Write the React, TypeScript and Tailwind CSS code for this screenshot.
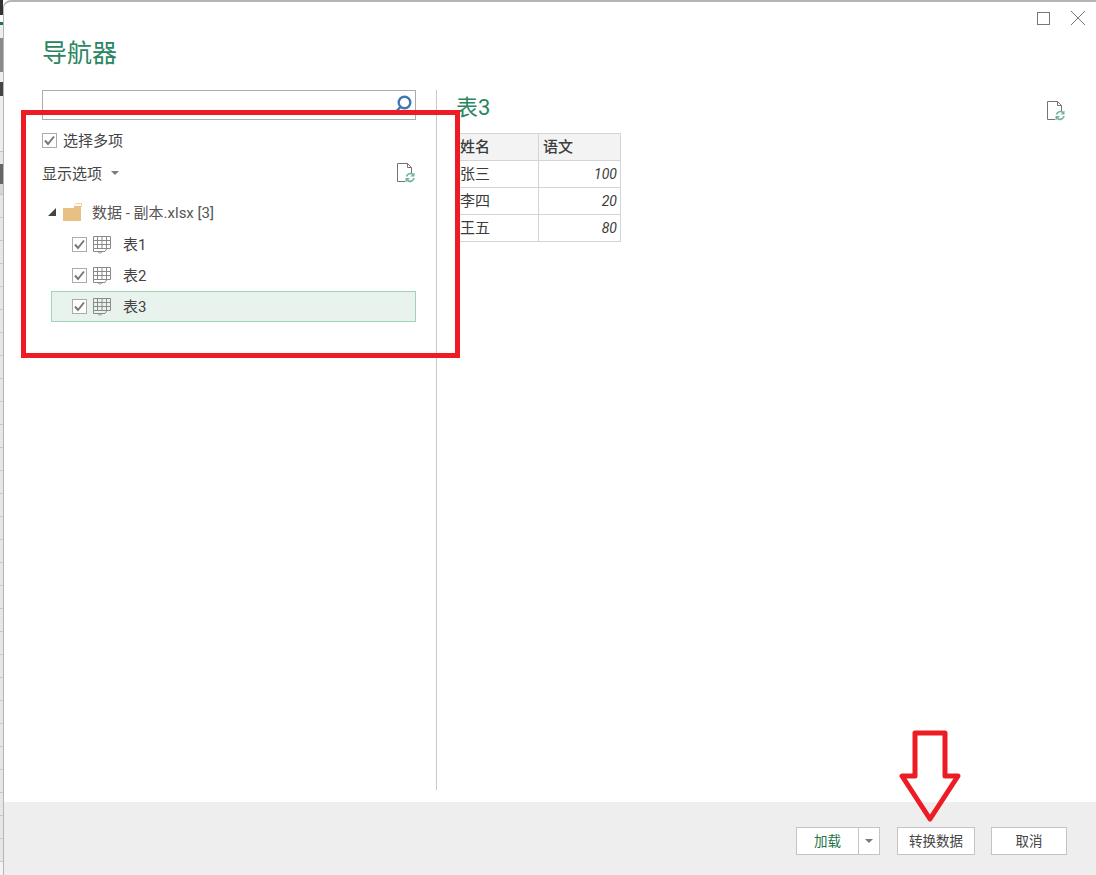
const cjk = "font-['Roboto','Noto_Sans_CJK_SC',sans-serif]";

const CheckBox = () => (
  <span className="flex h-[15px] w-[15px] shrink-0 items-center justify-center border border-[#ababab] bg-white">
    <svg width="11" height="11" viewBox="0 0 11 11" fill="none">
      <path d="M1 5.5 L4 9 L10 1.5" stroke="#777777" strokeWidth="2" />
    </svg>
  </span>
);

const RefreshDoc = () => (
  <svg width="19" height="20" viewBox="0 0 19 20" fill="none">
    <path d="M0.5 0.5 H10.5 L14.5 4.5 V10 M10.5 0.5 V4.5 H14.5 M8 18.5 H0.5 V0.5" stroke="#737373" strokeWidth="1" />
    <path d="M9.5 13.5 A4 4 0 0 1 16 11.5 M17 15 A4 4 0 0 1 10.5 17.5" stroke="#6fb597" strokeWidth="1.7" />
    <path d="M17.5 9.5 V13.5 H13.5 Z M8.5 19.5 V15 H13 Z" fill="#6fb597" />
  </svg>
);

const TableIcon = () => (
  <svg width="19" height="18" viewBox="0 0 19 18" fill="none" className="shrink-0">
    <path
      d="M0.5 0.5 H17.5 V12.5 H0.5 Z M0.5 4.5 H17.5 M0.5 8.5 H17.5 M4.5 0.5 V12.5 M9 0.5 V12.5 M13.5 0.5 V12.5 M0.5 12.5 V15.5 H12 L14 12.5 M5 15.5 C5 17.5 9 17.5 9 15.5"
      stroke="#8a8a8a"
      strokeWidth="1"
    />
  </svg>
);

const Caret = () => (
  <span className="h-0 w-0 border-x-[4px] border-t-[4px] border-x-transparent border-t-[#7a7a7a]" />
);

const TreeItem = ({ label, selected }: { label: string; selected?: boolean }) => (
  <div
    className={
      selected
        ? 'flex h-[31px] items-center border border-[#9fd4b6] bg-[#e9f3ee] pl-[20px]'
        : 'flex h-[31px] items-center border border-transparent pl-[20px]'
    }
  >
    <CheckBox />
    <span className="ml-[6px] flex">
      <TableIcon />
    </span>
    <span className="ml-[11px] pt-[2px] text-[15px] text-[#444444]">{label}</span>
  </div>
);

const rows = [
  { name: '张三', score: 100 },
  { name: '李四', score: 20 },
  { name: '王五', score: 80 }
];

const sheetRows = Array.from({ length: 29 }, (_, i) => i);

export default function App() {
  return (
    <div className={`relative flex h-[875px] w-[1096px] overflow-hidden bg-white ${cjk}`}>
      {/* sliver of the spreadsheet behind the dialog */}
      <div className="flex w-[3px] shrink-0 flex-col bg-[#f4f4f4]">
        <div className="h-[15px] bg-[#333333]" />
        <div className="h-[7px] bg-white" />
        <div className="h-[3px] bg-[#217346]" />
        <div className="h-[13px] bg-[#eeeeee]" />
        <div className="h-[34px] bg-[#8a8a8a]" />
        <div className="h-[10px] bg-[#eeeeee]" />
        <div className="h-[14px] bg-[#444444]" />
        <div className="h-[56px] border-b border-[#c4c4c4] bg-[#eeeeee]" />
        <div className="h-[12px] bg-[#e6e6e6]" />
        <div className="h-[20px] bg-[#666666]" />
        <div className="h-[11px] border-b border-[#c4c4c4] bg-[#d6d6d6]" />
        {sheetRows.map((row) => (
          <div key={row} className="h-[23px] shrink-0 border-b border-[#c9c9c9] bg-[#e6e6e6]" />
        ))}
      </div>

      <div className="flex min-w-0 flex-1 flex-col rounded-tl-[8px] border-t-2 border-l border-[#b5b5b5] bg-white">
        <div className="relative flex min-h-0 flex-1 flex-col">
          <div className="absolute top-[8px] right-[10px] flex items-center gap-[20px]">
            <span className="h-[13px] w-[13px] border border-[#777777]" />
            <svg width="16" height="16" viewBox="0 0 16 16" fill="none">
              <path d="M1 1 L15 15 M15 1 L1 15" stroke="#777777" strokeWidth="1" />
            </svg>
          </div>

          <h1 className="mt-[36px] ml-[38px] text-[25px] leading-[32px] font-normal text-[#2a8560]">导航器</h1>

          <div className="mt-[20px] flex min-h-0 flex-1 pb-[12px]">
            <div className="ml-[38px] w-[374px] shrink-0">
              <div className="flex h-[30px] items-start justify-end border border-[#ababab] pr-[3px] pt-[4px]">
                <svg width="17" height="17" viewBox="0 0 17 17" fill="none">
                  <circle cx="9.5" cy="7.5" r="5.8" stroke="#3f78b5" strokeWidth="2.4" />
                  <path d="M5.5 12 L1.5 16" stroke="#3f78b5" strokeWidth="2.4" />
                </svg>
              </div>

              <label className="mt-[10px] flex h-[20px] items-center gap-[6px] text-[15px] leading-[20px] text-[#444444]">
                <CheckBox />
                <span className="pt-[2px]">选择多项</span>
              </label>

              <div className="mt-[12px] flex h-[22px] items-center text-[15px] text-[#444444]">
                <span className="pt-[2px]">显示选项</span>
                <span className="ml-[9px] flex">
                  <Caret />
                </span>
                <span className="ml-auto flex">
                  <RefreshDoc />
                </span>
              </div>

              <div className="mt-[15px] flex h-[26px] items-center pl-[6px] text-[15px] text-[#555555]">
                <svg width="8" height="8" viewBox="0 0 8 8">
                  <path d="M8 0 V8 H0 Z" fill="#444444" />
                </svg>
                <svg width="19" height="18" viewBox="0 0 19 18" className="ml-[7px]">
                  <path d="M0 5 H11 V3 H18 V18 H0 Z" fill="#e8c084" />
                  <path d="M11 2.5 L13 0.5 H18.5 V4" fill="none" stroke="#eed3a8" strokeWidth="1" />
                </svg>
                <span className="ml-[10px] pt-[2px]">数据 - 副本.xlsx [3]</span>
              </div>

              <div className="mt-[4px] ml-[9px]">
                <TreeItem label="表1" />
                <TreeItem label="表2" />
                <TreeItem label="表3" selected />
              </div>
            </div>

            <div className="ml-[20px] w-[1px] shrink-0 bg-[#c8c8c8]" />

            <div className="ml-[19px] flex min-w-0 flex-1 flex-col">
              <div className="flex items-start justify-between pr-[30px]">
                <h2 className="mt-[4px] text-[22px] leading-[28px] font-normal text-[#2a8560]">表3</h2>
                <span className="mt-[11px] flex">
                  <RefreshDoc />
                </span>
              </div>
              <table className="mt-[11px] ml-[1px] w-[164px] table-fixed border-collapse text-[15px] text-[#3c3c3c]">
                <thead>
                  <tr className="h-[27px] bg-[#f3f3f3]">
                    <th className="w-[81px] border border-[#d4d4d4] pl-[2px] text-left font-medium">姓名</th>
                    <th className="border border-[#d4d4d4] pl-[4px] text-left font-medium">语文</th>
                  </tr>
                </thead>
                <tbody>
                  {rows.map((row) => (
                    <tr key={row.name} className="h-[27px]">
                      <td className="border border-[#d4d4d4] pl-[2px]">{row.name}</td>
                      <td className="border border-[#d4d4d4] pr-[3px] text-right text-[14px] italic">{row.score}</td>
                    </tr>
                  ))}
                </tbody>
              </table>
            </div>
          </div>
        </div>

        <div className="flex h-[73px] shrink-0 items-start justify-end bg-[#eeeeee] pt-[25px] pr-[29px] text-[13.5px]">
          <div className="flex h-[28px] w-[84px] border border-[#c4c4c4] bg-white">
            <span className="flex flex-1 items-center justify-center border-r border-[#c4c4c4] text-[#217346]">加载</span>
            <span className="flex w-[20px] items-center justify-center">
              <Caret />
            </span>
          </div>
          <button className="ml-[17px] h-[28px] w-[78px] border border-[#c4c4c4] bg-white text-[#444444]">转换数据</button>
          <button className="ml-[16px] h-[28px] w-[76px] border border-[#c4c4c4] bg-white text-[#444444]">取消</button>
        </div>
      </div>

      {/* red annotations drawn over the screenshot */}
      <div className="absolute top-[110px] left-[21px] h-[248px] w-[439px] border-[5px] border-[#ed1c24]" />
      <svg className="absolute top-[729px] left-[898px]" width="64" height="94" viewBox="0 0 64 94" fill="none">
        <path d="M17 4 H32 H47 V47 H60 L32 90 L4 47 H17 Z" stroke="#ed1c24" strokeWidth="5" strokeLinejoin="round" />
      </svg>
    </div>
  );
}
